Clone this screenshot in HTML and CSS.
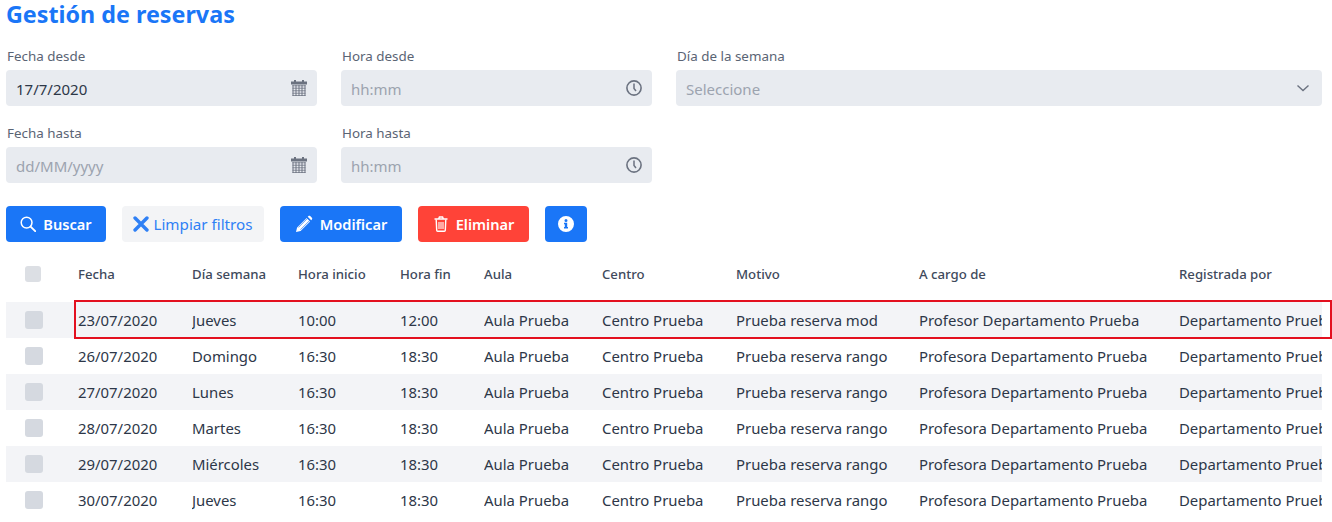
FILE: index.html
```html
<!DOCTYPE html>
<html lang="es">
<head>
    <meta charset="UTF-8">
    <title>Gestión de reservas</title>
    <link rel="stylesheet" href="styles.css">
</head>
<body>
    <h1 class="title">Gestión de reservas</h1>

    <form class="filters">
        <div class="field">
            <label class="field-label">Fecha desde</label>
            <div class="field-box">
                <input class="field-input" type="text" value="17/7/2020" placeholder="dd/MM/yyyy">
                <svg class="icon-cal" viewBox="0 0 16 16"><use href="#cal"/></svg>
            </div>
        </div>
        <div class="field">
            <label class="field-label">Hora desde</label>
            <div class="field-box">
                <input class="field-input" type="text" placeholder="hh:mm">
                <svg class="icon-clock" viewBox="0 0 16 16"><use href="#clock"/></svg>
            </div>
        </div>
        <div class="field">
            <label class="field-label">Día de la semana</label>
            <div class="field-box">
                <input class="field-input" type="text" placeholder="Seleccione">
                <svg class="icon-chevron" viewBox="0 0 14 8"><path d="M1.5 1.5 7 6.5l5.500-5" fill="none" stroke="currentColor" stroke-width="1.4"/></svg>
            </div>
        </div>
        <div class="field">
            <label class="field-label">Fecha hasta</label>
            <div class="field-box">
                <input class="field-input" type="text" placeholder="dd/MM/yyyy">
                <svg class="icon-cal" viewBox="0 0 16 16"><use href="#cal"/></svg>
            </div>
        </div>
        <div class="field">
            <label class="field-label">Hora hasta</label>
            <div class="field-box">
                <input class="field-input" type="text" placeholder="hh:mm">
                <svg class="icon-clock" viewBox="0 0 16 16"><use href="#clock"/></svg>
            </div>
        </div>
    </form>

    <div class="actions">
        <button class="btn btn-blue btn-search" type="button">
            <svg class="btn-icon" viewBox="0 0 16 16"><circle cx="6.6" cy="6.6" r="5.4" fill="none" stroke="currentColor" stroke-width="1.5"/><path d="m10.6 10.6 4.6 4.6" stroke="currentColor" stroke-width="1.9" stroke-linecap="round"/></svg>
            Buscar
        </button>
        <button class="btn btn-light" type="button">
            <svg class="btn-icon" viewBox="0 0 14 14"><path d="M1.800 1.800 12.200 12.200M12.200 1.800 1.800 12.200" stroke="currentColor" stroke-width="3" stroke-linecap="round"/></svg>
            Limpiar filtros
        </button>
        <button class="btn btn-blue btn-edit" type="button">
            <svg class="btn-icon btn-icon-edit" viewBox="0 0 18 18"><path d="M1 17l1.100-4.600L11.600 2.900l3.500 3.500-9.500 9.500zM12.700 1.800l.8-.7c.6-.5 1.200-.5 1.700 0l1.700 1.700c.5.500.5 1.100 0 1.700l-.7.800z" fill="currentColor"/><path d="M3.300 12.500l9.300-9.300M5.500 14.700l9.300-9.300" stroke="#1a76f7" stroke-width=".7" fill="none"/></svg>
            Modificar
        </button>
        <button class="btn btn-red" type="button">
            <svg class="btn-icon btn-icon-trash" viewBox="0 0 14 16"><path d="M.5 3h13M4.600 3l.8-2h3.200l.8 2" fill="none" stroke="currentColor" stroke-width="1.400"/><path d="M2.200 3.500l.5 10.800c0 .6.400 1 1 1h6.600c.6 0 1-.4 1-1l.5-10.800" fill="none" stroke="currentColor" stroke-width="1.400"/><path d="M5 6v7M7 6v7M9 6v7" stroke="currentColor" stroke-width="1.100"/></svg>
            Eliminar
        </button>
        <button class="btn btn-blue btn-info" type="button" aria-label="Información">
            <svg class="info-icon" viewBox="0 0 16 16"><path d="M8 0a8 8 0 1 0 0 16A8 8 0 0 0 8 0zm0 3a1.500 1.500 0 1 1 0 3 1.500 1.500 0 0 1 0-3zm2 9.500H6V11h.8V8.200H6V6.800h3.200V11h.8z" fill="currentColor" fill-rule="evenodd"/></svg>
        </button>
    </div>

    <div class="table-wrap">
        <table class="bookings">
            <colgroup>
                <col class="col-check"><col class="col-date"><col class="col-day"><col class="col-start"><col class="col-end"><col class="col-room"><col class="col-centre"><col class="col-reason"><col class="col-owner"><col class="col-by">
            </colgroup>
            <thead>
                <tr>
                    <th><span class="check check-head"></span></th>
                    <th>Fecha</th><th>Día semana</th><th>Hora inicio</th><th>Hora fin</th><th>Aula</th><th>Centro</th><th>Motivo</th><th>A cargo de</th><th>Registrada por</th>
                </tr>
            </thead>
            <tbody>
                <tr><td><span class="check"></span></td><td>23/07/2020</td><td>Jueves</td><td>10:00</td><td>12:00</td><td>Aula Prueba</td><td>Centro Prueba</td><td>Prueba reserva mod</td><td>Profesor Departamento Prueba</td><td>Departamento Prueba</td></tr>
                <tr><td><span class="check"></span></td><td>26/07/2020</td><td>Domingo</td><td>16:30</td><td>18:30</td><td>Aula Prueba</td><td>Centro Prueba</td><td>Prueba reserva rango</td><td>Profesora Departamento Prueba</td><td>Departamento Prueba</td></tr>
                <tr><td><span class="check"></span></td><td>27/07/2020</td><td>Lunes</td><td>16:30</td><td>18:30</td><td>Aula Prueba</td><td>Centro Prueba</td><td>Prueba reserva rango</td><td>Profesora Departamento Prueba</td><td>Departamento Prueba</td></tr>
                <tr><td><span class="check"></span></td><td>28/07/2020</td><td>Martes</td><td>16:30</td><td>18:30</td><td>Aula Prueba</td><td>Centro Prueba</td><td>Prueba reserva rango</td><td>Profesora Departamento Prueba</td><td>Departamento Prueba</td></tr>
                <tr><td><span class="check"></span></td><td>29/07/2020</td><td>Miércoles</td><td>16:30</td><td>18:30</td><td>Aula Prueba</td><td>Centro Prueba</td><td>Prueba reserva rango</td><td>Profesora Departamento Prueba</td><td>Departamento Prueba</td></tr>
                <tr><td><span class="check"></span></td><td>30/07/2020</td><td>Jueves</td><td>16:30</td><td>18:30</td><td>Aula Prueba</td><td>Centro Prueba</td><td>Prueba reserva rango</td><td>Profesora Departamento Prueba</td><td>Departamento Prueba</td></tr>
            </tbody>
        </table>
    </div>

    <div class="highlight"></div>

    <svg class="sprites" width="0" height="0">
        <symbol id="cal" viewBox="0 0 16 16">
            <path d="M3 0h2v1.500h6V0h2v1.500h3V4.500H0V1.500h3z" fill="currentColor"/>
            <path d="M1.500 5.800h13M1.500 8.300h13M1.500 10.800h13M1.500 13.300h13M1.500 15.500h13" stroke="currentColor" stroke-width="1.100" fill="none" opacity=".75"/>
            <path d="M2 5v11M5 5v11M8 5v11M11 5v11M14 5v11" stroke="currentColor" stroke-width="1.300" fill="none" opacity=".75"/>
        </symbol>
        <symbol id="clock" viewBox="0 0 16 16">
            <circle cx="8" cy="8" r="7.100" fill="none" stroke="currentColor" stroke-width="1.600"/>
            <path d="M8 3.500V8.500l2 2.500" fill="none" stroke="currentColor" stroke-width="1.500"/>
        </symbol>
    </svg>
</body>
</html>
```

FILE: styles.css
```css
* {
    box-sizing: border-box;
}

html, body {
    height: 100%;
    overflow: hidden;
}

body {
    position: relative;
    margin: 0;
    padding: 0 10px 0 6px;
    font-family: "Noto Sans", "Open Sans", sans-serif;
    font-size: 14.9px;
    color: #2d3748;
    background: #fff;
}

.title {
    margin: 0;
    height: 46px;
    font-size: 23.3px;
    line-height: 28px;
    font-weight: 700;
    color: #1a76f7;
}

.filters {
    display: grid;
    grid-template-columns: 311px 311px 646px;
    column-gap: 24px;
    row-gap: 17px;
}

.field-label {
    display: block;
    height: 24px;
    padding-left: 1px;
    line-height: 20px;
    font-size: 13.4px;
    color: #5a6474;
}

.field-box {
    display: flex;
    align-items: center;
    height: 36px;
    padding: 0 10px;
    border-radius: 4px;
    background: #e8ebf0;
    color: #6b7280;
}

.field-input {
    flex: 1;
    min-width: 0;
    padding: 1px 0 0;
    border: none;
    outline: none;
    background: transparent;
    font: inherit;
    font-size: 15px;
    color: #2d3748;
}

.field-input::placeholder {
    color: #9ca3af;
    opacity: 1;
}

.icon-cal {
    width: 16px;
    height: 16px;
}

.icon-clock {
    width: 16px;
    height: 16px;
}

.icon-chevron {
    width: 14px;
    height: 8px;
    margin-right: 2px;
}

.actions {
    display: flex;
    gap: 16px;
    margin-top: 23px;
}

.btn {
    display: flex;
    align-items: center;
    justify-content: center;
    gap: 7px;
    height: 36px;
    padding: 0;
    border: none;
    border-radius: 4px;
    font: inherit;
    font-size: 14.6px;
    font-weight: 600;
    cursor: pointer;
}

.btn-search { width: 100px; }
.btn-edit { width: 122px; }

.btn-blue {
    background: #1a76f7;
    color: #fff;
}

.btn-red {
    width: 111px;
    background: #ff4338;
    color: #fff;
}

.btn-light {
    width: 142px;
    gap: 4px;
    background: #f3f4f6;
    color: #2f80f5;
    font-size: 15.2px;
    font-weight: 400;
}

.btn-icon {
    width: 16px;
    height: 16px;
}

.btn-icon-edit {
    width: 18px;
    height: 18px;
}

.btn-info {
    width: 42px;
}

.info-icon {
    width: 16px;
    height: 16px;
}

.table-wrap {
    margin-top: 6px;
    width: 1316px;
    overflow: hidden;
}

.bookings {
    width: 1316px;
    table-layout: fixed;
    border-collapse: collapse;
}

.col-check { width: 72px; }
.col-date { width: 114px; }
.col-day { width: 106px; }
.col-start { width: 102px; }
.col-end { width: 84px; }
.col-room { width: 118px; }
.col-centre { width: 134px; }
.col-reason { width: 183px; }
.col-owner { width: 260px; }
.col-by { width: 143px; }

.bookings th {
    height: 54px;
    padding: 0 0 2px;
    text-align: left;
    font-size: 13.2px;
    font-weight: 500;
    color: #404a5c;
    white-space: nowrap;
}

.bookings td {
    height: 36px;
    padding: 0;
    white-space: nowrap;
    overflow: hidden;
}

.bookings tbody tr:nth-child(odd) {
    background: #f3f4f7;
}

.check {
    display: block;
    width: 18px;
    height: 18px;
    margin-left: 19px;
    border-radius: 3px;
    background: #d5d9e0;
}

.check-head {
    width: 16px;
    height: 16px;
    background: #dcdfe4;
}

.highlight {
    position: absolute;
    left: 74px;
    top: 300px;
    width: 1258px;
    height: 39px;
    border: 2px solid #e3101f;
}

.sprites {
    position: absolute;
}
```
